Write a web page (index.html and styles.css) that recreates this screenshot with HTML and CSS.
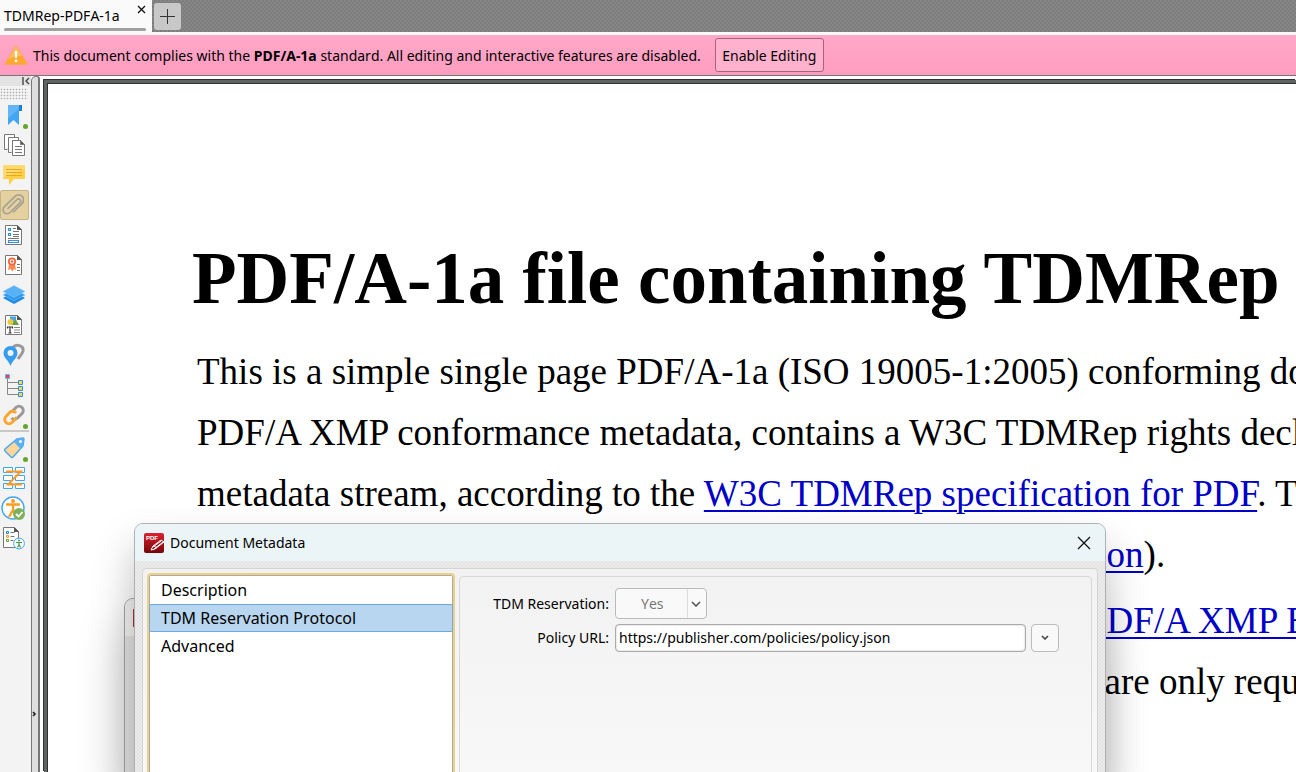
FILE: index.html
```html
<!DOCTYPE html>
<html lang="en">
<head>
    <meta charset="UTF-8">
    <meta name="viewport" content="width=device-width, initial-scale=1.0">
    <title>TDMRep-PDFA-1a</title>
    <link rel="stylesheet" href="styles.css">
</head>
<body>

<header class="tabs">
    <div class="tabs__item">
        <a class="tabs__link" href="#page">TDMRep-PDFA-1a</a>
        <button class="tabs__close" aria-label="Close tab">
            <svg width="9" height="9" viewBox="0 0 9 9"><path d="M1 1l7 7M8 1l-7 7" stroke="#111" stroke-width="1.3"/></svg>
        </button>
    </div>
    <button class="tabs__add" aria-label="New tab">
        <svg width="16" height="16" viewBox="0 0 16 16"><path d="M7.500 0v15M0 7.500h15" stroke="#333"/></svg>
    </button>
</header>

<div class="notice">
    <svg class="notice__icon" width="24" height="20" viewBox="0 0 24 20">
        <path d="M12 1.500L22.500 19h-21z" fill="#ffa82e" stroke="#ffa82e" stroke-width="1.500" stroke-linejoin="round"/>
        <path d="M12 1.500L18 11Q9 11 4 15z" fill="#ffbd62"/>
        <path d="M10.700 6h2.600l-.5 7h-1.600z" fill="#fff"/><circle cx="12" cy="15.800" r="1.500" fill="#fff"/>
    </svg>
    <span class="notice__text">This document complies with the <b>PDF/A-1a</b> standard. All editing and interactive features are disabled.</span>
    <button class="notice__button">Enable Editing</button>
</div>

<main class="workspace">
    <nav class="panes">
        <button class="panes__toggle" aria-label="Collapse panes">
            <svg width="8" height="8" viewBox="0 0 8 8"><path d="M1 0v8M7 1L4 4l3 3" fill="none" stroke="#444" stroke-width="1.400"/></svg>
        </button>
        <div class="panes__grip"></div>

        <button class="panes__item panes__item--dot" aria-label="Bookmarks">
            <svg width="24" height="24" viewBox="0 0 24 24"><path d="M17 2h4v6h-4z" fill="#1e7fd0"/><path d="M7 2h11v20l-5.500-5L7 22z" fill="#42a5f5"/><path d="M7 2h11v4L7 15z" fill="#64b5f6"/></svg>
        </button>
        <button class="panes__item" aria-label="Thumbnails">
            <svg width="24" height="24" viewBox="0 0 24 24" fill="#fff" stroke="#777"><path d="M3.500 16.500v-15h10v3"/><path d="M3.500 16.500h3"/><path d="M7.500 19.500v-15h10v3"/><path d="M7.500 19.500h3"/><path d="M11.500 7.500h8l4 4v11h-12z"/><path d="M19.500 7.500l4 4h-4z" fill="#555"/><path d="M14 13.500h7M14 16.500h7M14 19.500h7"/></svg>
        </button>
        <button class="panes__item" aria-label="Comments">
            <svg width="24" height="24" viewBox="0 0 24 24"><path d="M3 2h20a1 1 0 011 1v13H13l-5 6v-6H3a1 1 0 01-1-1V3a1 1 0 011-1z" fill="#ffcf45"/><path d="M3 2h20l1 1v3L2 15V3z" fill="#ffda70"/><path d="M5 6.500h16M5 9.500h16M5 12.500h16" stroke="#e6a91f"/></svg>
        </button>
        <button class="panes__item panes__item--active" aria-label="Attachments">
            <svg width="26" height="26" viewBox="0 0 26 26"><path d="M10 16.500l9-9a2.200 2.200 0 013.200 3L12 20.500a4 4 0 01-5.800-5.600L17 4.300a5 5 0 017.200 7L15.500 20" fill="none" stroke="#a5a193" stroke-width="1.700" stroke-linecap="round"/></svg>
        </button>
        <button class="panes__item" aria-label="Fields">
            <svg width="24" height="24" viewBox="0 0 24 24"><path d="M4.500 2.500h12l4 4v15h-16z" fill="#fff" stroke="#777"/><path d="M16 2l5 5h-5z" fill="#555"/><path d="M7.500 5.500h2v2h-2zM7.500 10.500h2v2h-2zM7.500 17.500h10v2h-10z" fill="#fff" stroke="#3290dd" stroke-width="1.200"/><path d="M12 5.500h3M12 8.500h6M12 11.500h6M12 13.500h6M7 15.500h11" stroke="#777"/></svg>
        </button>
        <button class="panes__item" aria-label="Signatures">
            <svg width="24" height="24" viewBox="0 0 24 24"><path d="M4.500 2.500h12l4 4v15h-16z" fill="#fff" stroke="#777"/><path d="M16 2l5 5h-5z" fill="#555"/><path d="M8 11l-1 6 2.500-1 2 2.500 1.500-2.500 2 1-1-6" fill="#ff8a50"/><circle cx="11" cy="8.500" r="3.200" fill="#fff" stroke="#f4673e" stroke-width="1.800"/><circle cx="11" cy="8.500" r="1.200" fill="#f4673e"/><path d="M16 11.500h3M16 14.500h3M16 17.500h3" stroke="#777"/></svg>
        </button>
        <button class="panes__item" aria-label="Layers">
            <svg width="24" height="24" viewBox="0 0 24 24"><path d="M2 15l11 6 11-6-11-6z" fill="#1e88e5"/><path d="M2 12l11 6 11-6-11-6z" fill="#2f9bf0" stroke="#8cc6f7" stroke-width=".5"/><path d="M2 8.500L13 14.500 24 8.500 13 2.500z" fill="#58b0f5" stroke="#8cc6f7" stroke-width=".5"/></svg>
        </button>
        <button class="panes__item" aria-label="Content">
            <svg width="24" height="24" viewBox="0 0 24 24"><path d="M4.500 2.500h12l4 4v15h-16z" fill="#fff" stroke="#777"/><path d="M16 2l5 5h-5z" fill="#555"/><path d="M9 3.500h6v7H9z" fill="#42a5f5"/><circle cx="9.500" cy="9" r="3" fill="#f5c63a"/><path d="M11 12l3.500-6 3.500 6z" fill="#66a33a"/><path d="M6.500 15.500v-1.500h5v1.500M9 14v6M7.500 20h3" fill="none" stroke="#333" stroke-width="1.200"/><path d="M13 14.500h6M13 17h6M13 19.500h6" stroke="#888"/></svg>
        </button>
        <button class="panes__item" aria-label="Destinations">
            <svg width="24" height="24" viewBox="0 0 24 24"><path d="M12 4.500c3-4 11-2 10 3.500-.7 3-3 5-5 8" fill="none" stroke="#999" stroke-width="3"/><path fill-rule="evenodd" d="M9.500 3a7 7 0 00-7 7c0 5 5 7 7 13 2-6 7-8 7-13a7 7 0 00-7-7zm0 4a3 3 0 110 6 3 3 0 010-6z" fill="#359cf1"/></svg>
        </button>
        <button class="panes__item" aria-label="Structure">
            <svg width="24" height="24" viewBox="0 0 24 24"><path d="M6.500 4v17.500H19M6.500 9.500H19M6.500 15.500H19" fill="none" stroke="#888"/><path d="M4.500 1.500h4v4h-4z" fill="#f44336" stroke="#64b5f6"/><path d="M17.500 7.500h4v4h-4zM17.500 13.500h4v4h-4zM17.500 19.500h4v4h-4z" fill="#ffd54f" stroke="#2e8fe0"/></svg>
        </button>
        <button class="panes__item panes__item--dot" aria-label="Links">
            <svg width="24" height="24" viewBox="0 0 24 24" fill="none" stroke-width="3"><path d="M10.500 9L15 4.500a4.300 4.300 0 016 0 4.300 4.300 0 010 6L16.500 15a4.300 4.300 0 01-6 0" stroke="#999"/><path d="M15.500 14.500L11 19.500a4.300 4.300 0 01-6 0 4.300 4.300 0 010-6L9 9a4.300 4.300 0 016 1" stroke="#ffa52e"/></svg>
        </button>
        <hr class="panes__line">
        <button class="panes__item panes__item--dot" aria-label="Tags">
            <svg width="24" height="24" viewBox="0 0 24 24"><path d="M16 3l6-1 1 1-1 7-10 11q-1 1-2 0l-6-6q-1-1 0-2z" fill="#ffd699" stroke="#42a5f5" stroke-width="1.400"/><path d="M16 3l6-1 1 1-1 7-2.500 3L13 6z" fill="#5cb1f6"/><circle cx="19.500" cy="5.500" r="1.500" fill="#fff"/></svg>
        </button>
        <button class="panes__item" aria-label="Order">
            <svg width="24" height="24" viewBox="0 0 24 24"><path d="M2.500 1.500h9v5h-9zM14.500 1.500h9v5h-9zM2.500 9.500h9v5h-9zM14.500 9.500h9v5h-9zM2.500 17.500h9v5h-9zM14.500 17.500h9v5h-9z" fill="#fff" stroke="#42a5f5"/><path d="M5 5.500h15L7 18.500h14" fill="none" stroke="#ff9c23" stroke-width="2"/></svg>
        </button>
        <button class="panes__item" aria-label="Accessibility check">
            <svg width="26" height="26" viewBox="0 0 26 26"><circle cx="14" cy="13" r="11" fill="#fff" stroke="#42a5f5" stroke-width="1.400"/><circle cx="14" cy="6" r="2" fill="#ff9c23"/><path d="M7 9.500h14M14 10v5l-4 7M14 15l3 5" fill="none" stroke="#ff9c23" stroke-width="2.400"/><circle cx="20" cy="19" r="6" fill="#7cb15a"/><path d="M17 19l2.500 2.500L23.500 17" fill="none" stroke="#fff" stroke-width="1.800"/></svg>
        </button>
        <button class="panes__item" aria-label="Accessibility report">
            <svg width="26" height="26" viewBox="0 0 26 26"><path d="M4.500 2.500h11l4 4v16h-15z" fill="#fff" stroke="#777"/><path d="M15 2l5 5h-5z" fill="#555"/><path d="M7.500 6.500h2v2h-2z" stroke="#1e88e5" fill="none"/><path d="M7.500 10.500h2v2h-2z" stroke="#ff9c23" fill="none"/><path d="M7.500 14.500h2v2h-2z" stroke="#66a33a" fill="none"/><path d="M11.500 7.500h4M11.500 11.500h4M11.500 15.500h3" stroke="#777"/><circle cx="20" cy="18.500" r="5.400" fill="#fff" stroke="#42a5f5"/><circle cx="20" cy="15.500" r="1" fill="#3f9d52"/><path d="M17 17.500h6M20 17.500v2l-1.500 3M20 19.500l1.500 3" fill="none" stroke="#3f9d52" stroke-width="1.200"/></svg>
        </button>
    </nav>

    <div class="splitter">
        <svg width="5" height="6" viewBox="0 0 5 6"><path d="M1 1l2 2-2 2" fill="none" stroke="#222" stroke-width="1.600"/></svg>
    </div>

    <article class="page" id="page">
        <h1 class="page__title">PDF/A-1a file containing TDMRep</h1>
        <p class="page__text">
            This is a simple single page PDF/A-1a (ISO 19005-1:2005) conforming document<br>
            PDF/A XMP conformance metadata, contains a W3C TDMRep rights declaration<br>
            metadata stream, according to the <a href="#spec">W3C TDMRep specification for PDF</a>. The
        </p>
        <p class="page__text page__text--tail"><a href="#spec">tion</a>).</p>
        <p class="page__text page__text--tail page__text--next"><a href="#schema">PDF/A XMP Extension</a><br>, are only required</p>
    </article>
</main>

<div class="window-behind"><div class="window-behind__bar"></div></div>

<section class="dialog">
    <div class="dialog__bar">
        <svg width="20" height="20" viewBox="0 0 20 20">
            <defs><linearGradient id="red" x2="0" y2="1"><stop stop-color="#dd2230"/><stop offset="1" stop-color="#750609"/></linearGradient></defs>
            <rect width="20" height="20" rx="2" fill="url(#red)"/>
            <text class="dialog__logo" x="2" y="7">PDF</text>
            <path d="M7 17l2-4 8-6 3 2-9 7zM10 13l3 2M9 14l8-6M10 16l9-7" fill="none" stroke="#fff"/>
        </svg>
        <h2 class="dialog__title">Document Metadata</h2>
        <button class="dialog__close" aria-label="Close">
            <svg width="14" height="14" viewBox="0 0 14 14"><path d="M1 1l12 12M13 1L1 13" stroke="#111" stroke-width="1.300"/></svg>
        </button>
    </div>
    <div class="dialog__body">
        <div class="dialog__content">
            <ul class="sections">
                <li><button class="sections__item">Description</button></li>
                <li><button class="sections__item sections__item--active">TDM Reservation Protocol</button></li>
                <li><button class="sections__item">Advanced</button></li>
            </ul>
            <form class="form">
                <label for="reservation">TDM Reservation:</label>
                <div class="form__select">
                    <select id="reservation" disabled><option>Yes</option></select>
                    <svg width="10" height="6" viewBox="0 0 10 6"><path d="M1 1l4 4 4-4" fill="none" stroke="#555" stroke-width="1.600"/></svg>
                </div>
                <label for="policy">Policy URL:</label>
                <div class="form__row">
                    <input id="policy" type="text" value="https://publisher.com/policies/policy.json">
                    <button class="form__more" type="button" aria-label="Recent URLs">
                        <svg width="8" height="5" viewBox="0 0 8 5"><path d="M1 1l3 3 3-3" fill="none" stroke="#444" stroke-width="1.600"/></svg>
                    </button>
                </div>
            </form>
        </div>
    </div>
</section>

</body>
</html>
```
FILE: styles.css
```css
/* General styles */
* {
    box-sizing: border-box;
}
body {
    font-family: "Noto Sans", "Open Sans", sans-serif;
    font-size: 14px;
    line-height: 20px;
    font-kerning: none;
    color: #000;
    margin: 0;
    height: 100vh;
    display: flex;
    flex-direction: column;
    position: relative;
    overflow: hidden;
}
button, input, select {
    font: inherit;
    font-kerning: inherit;
    color: inherit;
}
button {
    padding: 0;
    border: none;
    background: none;
}
svg {
    display: block;
    flex: none;
}

/* Tabs */
.tabs {
    display: flex;
    height: 35px;
    border-bottom: 3px solid #fafafa;
    background: repeating-conic-gradient(#7d7d7d 0 25%, #868686 0 50%) 0 0 / 4px 4px;
}
.tabs__item {
    width: 152px;
    padding: 6px 4px 0;
    background: #fafafa;
    position: relative;
}
.tabs__item::after {
    content: "";
    position: absolute;
    left: 4px;
    right: 6px;
    bottom: 1px;
    height: 3px;
    border-radius: 2px;
    background: #a0a0a0;
}
.tabs__link {
    color: #000;
    text-decoration: none;
    white-space: nowrap;
}
.tabs__close {
    position: absolute;
    top: 5px;
    right: 6px;
}
.tabs__add {
    display: grid;
    place-items: center;
    width: 27px;
    height: 27px;
    margin: 3px 2px;
    border-radius: 3px;
    background: #c8c8c8;
}

/* Compliance notice */
.notice {
    display: flex;
    align-items: center;
    gap: 5px;
    height: 41px;
    border-bottom: 1px solid #777;
    padding: 0 4px;
    background: linear-gradient(#ffa8c8, #ff9dc0);
    white-space: nowrap;
}
.notice__text {
    padding: 2px 9px 0 0;
}
.notice__button {
    width: 109px;
    height: 34px;
    padding-top: 2px;
    border: 1px solid #a5647e;
    border-radius: 3px;
    background: #ffb1cd;
}

/* Workspace */
.workspace {
    display: flex;
    flex: 1;
    min-height: 0;
}
.panes {
    display: flex;
    flex-direction: column;
    width: 31px;
    background: #f3f3f3;
}
.panes__toggle {
    display: flex;
    justify-content: flex-end;
    align-items: center;
    flex: none;
    height: 10px;
    padding-right: 1px;
    background: #e3e3e3;
}
.panes__grip {
    flex: none;
    width: 28px;
    height: 12px;
    margin-top: 2px;
    background: radial-gradient(circle, #aaa 35%, transparent 50%) 0 0 / 3px 3px;
}
.panes__item {
    display: flex;
    justify-content: flex-end;
    align-items: center;
    flex: none;
    width: 29px;
    height: 30px;
    padding-right: 4px;
    position: relative;
}
.panes__item--active {
    border: 1px solid #c4b384;
    border-radius: 2px;
    background: #e5d1a0;
}
.panes__item--dot::after {
    content: "";
    position: absolute;
    right: 1px;
    bottom: 1px;
    width: 5px;
    height: 5px;
    border-radius: 50%;
    background: #62a52b;
}
.panes__line {
    width: 29px;
    margin: 0 0 1px;
    border: none;
    border-top: 2px solid #c8c8c8;
}
.splitter {
    display: flex;
    align-items: flex-end;
    width: 9px;
    padding: 0 0 55px;
    border: solid #777;
    border-width: 1px 2px 0 1px;
    border-radius: 5px 3px 0 0;
    background: #dedede;
}

/* Document page */
.page {
    flex: 1;
    min-width: 0;
    margin: 4px 0 0 4px;
    padding: 156px 0 0 150px;
    border: solid #606363;
    border-width: 3px 0 0 3px;
    box-shadow: -1px -1px 0 #303030, inset 1px 1px 0 #303030;
    overflow: hidden;
    background: #fff;
    font-family: "Liberation Serif", serif;
    font-kerning: auto;
    white-space: nowrap;
}
.page__title {
    margin: 0 0 22px -5px;
    font-size: 73px;
    line-height: 80px;
}
.page__text {
    margin: 0;
    font-size: 37px;
    line-height: 61px;
}
.page__text--tail {
    padding-left: 889px;
}
.page__text--next {
    margin-top: 5px;
}
.page a {
    color: #0000c8;
    text-decoration-thickness: 2px;
    text-underline-offset: 4px;
}

/* Window under the dialog */
.window-behind {
    position: absolute;
    top: 598px;
    left: 124px;
    bottom: -10px;
    width: 75%;
    border: 1px solid #a0a0a0;
    border-radius: 9px;
    background: #e0e0e0;
    box-shadow: 0 24px 48px rgba(0, 0, 0, 0.22);
}
.window-behind__bar {
    height: 37px;
    border-radius: 8px 8px 0 0;
    background: linear-gradient(#a33, #a33) 8px 10px / 20px 18px no-repeat #f0f0f0;
}

/* Dialog */
.dialog {
    position: absolute;
    top: 523px;
    left: 134px;
    bottom: -10px;
    width: 75%;
    display: flex;
    flex-direction: column;
    border: 1px solid #adb1b3;
    border-radius: 9px;
    overflow: hidden;
    background: #e9e9e9;
    box-shadow: 0 24px 40px rgba(0, 0, 0, 0.25);
}
.dialog__bar {
    display: flex;
    align-items: center;
    gap: 6px;
    height: 37px;
    padding: 0 14px 0 9px;
    background: #ebf4f7;
}
.dialog__logo {
    fill: #fff;
    font: bold 6px "Liberation Sans", sans-serif;
}
.dialog__title {
    margin: 0;
    font-size: 14px;
    font-weight: normal;
}
.dialog__close {
    margin-left: auto;
}
.dialog__body {
    display: flex;
    flex: 1;
    padding: 7px 7px 0;
    background: repeating-conic-gradient(#e4e4e4 0 25%, #ebebeb 0 50%) 0 0 / 4px 4px;
}
.dialog__content {
    display: flex;
    flex: 1;
    gap: 4px;
    padding: 4px 5px 0 4px;
    border: 1px solid #d4d4d4;
    border-radius: 4px;
    background: linear-gradient(#f2f2f2, #f8f8f8);
}

/* Section list */
.sections {
    width: 308px;
    margin: 0;
    padding: 1px 0 0;
    border: 2px solid #edd083;
    border-radius: 4px;
    background: #fff;
    box-shadow: inset 0 0 0 1px #aaa;
    list-style: none;
    font-size: 16px;
}
.sections__item {
    display: block;
    width: 100%;
    height: 28px;
    padding: 0 11px;
    border: 1px solid transparent;
    text-align: left;
}
.sections__item--active {
    border-color: #70a8d8;
    border-radius: 2px;
    background: #b8d6ef;
}

/* Metadata form */
.form {
    display: grid;
    grid-template-columns: 149px 1fr;
    grid-auto-rows: 31px;
    gap: 3px 6px;
    align-items: center;
    align-content: start;
    flex: 1;
    margin-top: 3px;
    padding: 11px 32px 0 0;
    border: 1px solid #d8d8d8;
    border-radius: 4px;
}
.form label {
    text-align: right;
}
.form__select {
    position: relative;
    width: 92px;
}
.form__select select {
    display: block;
    appearance: none;
    width: 100%;
    height: 31px;
    padding: 0 25px;
    border: 1px solid #bbb;
    border-radius: 4px;
    background: linear-gradient(#ddd, #ddd) 71px 0 / 1px 100% no-repeat #f9f9f9;
    color: #777;
    opacity: 1;
}
.form__select svg {
    position: absolute;
    right: 6px;
    top: 13px;
}
.form__row {
    display: flex;
    gap: 5px;
}
.form__row input {
    flex: 1;
    min-width: 0;
    height: 28px;
    padding: 0 3px;
    border: 1px solid #aaa;
    border-radius: 4px;
    background: #fff;
    box-shadow: inset 0 0 2px #bbb;
}
.form__more {
    display: grid;
    place-items: center;
    width: 28px;
    height: 28px;
    border: 1px solid #bbb;
    border-radius: 4px;
    background: #f9f9f9;
}
```
